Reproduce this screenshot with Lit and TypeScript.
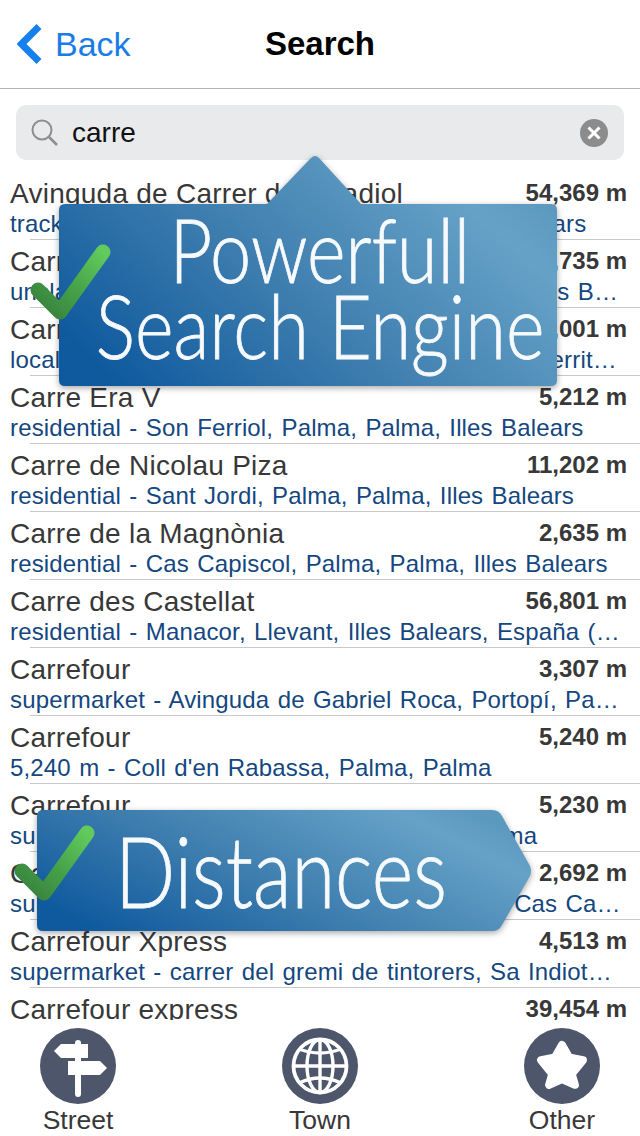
import { LitElement, html, css, svg } from "lit";
import { customElement } from "lit/decorators.js";

const rows = [
  ["Avinguda de Carrer del Gradiol", "54,369 m", "track - Son Ferriol, Inca, Palma, Palma, Illes Balears"],
  ["Carrer de Sa Creu", "2,735 m", "unclassified - El Pont d'Inca, Marratxí, Ponent, Illes Balears, España"],
  ["Carrer Gran", "8,001 m", "local - El Coll d'en Rabassa, Palma, Palma, Illa, territori balear"],
  ["Carre Era V", "5,212 m", "residential - Son Ferriol, Palma, Palma, Illes Balears"],
  ["Carre de Nicolau Piza", "11,202 m", "residential - Sant Jordi, Palma, Palma, Illes Balears"],
  ["Carre de la Magnònia", "2,635 m", "residential - Cas Capiscol, Palma, Palma, Illes Balears"],
  ["Carre des Castellat", "56,801 m", "residential - Manacor, Llevant, Illes Balears, España (mar territorial)"],
  ["Carrefour", "3,307 m", "supermarket - Avinguda de Gabriel Roca, Portopí, Palma, Palma"],
  ["Carrefour", "5,240 m", "5,240 m - Coll d'en Rabassa, Palma, Palma"],
  ["Carrefour", "5,230 m", "supermarket - Coll d'en Rabassa, Palma, Palma"],
  ["Carrefour", "2,692 m", "supermarket - carrer de Li Verdaguer, Palma, Cas Capiscol, Palma"],
  ["Carrefour Xpress", "4,513 m", "supermarket - carrer del gremi de tintorers, Sa Indiotería, Palma"],
  ["Carrefour express", "39,454 m", "supermarket - Avinguda de Mallorca, Palma"],
];

const gradient = (id: string) => svg`
  <defs>
    <linearGradient id=${id} x1="0" y1="0.75" x2="1" y2="0.25">
      <stop offset="0" stop-color="#0f5a9e" />
      <stop offset="0.4" stop-color="#3b7bad" />
      <stop offset="0.88" stop-color="#66a2c7" />
      <stop offset="1" stop-color="#5c99bf" />
    </linearGradient>
  </defs>`;

const check = (id: string) => html`
  <svg class="check" viewBox="0 0 90 84" width="90" height="84">
    <defs>
      <linearGradient id=${id} x1="0" y1="1" x2="1" y2="0">
        <stop offset="0" stop-color="#37803c" />
        <stop offset="0.5" stop-color="#46a34a" />
        <stop offset="1" stop-color="#62cb5c" />
      </linearGradient>
    </defs>
    <path d="M11 49 L33 71 L76 11" fill="none" stroke="url(#${id})" stroke-width="15" stroke-linecap="round" stroke-linejoin="round" />
  </svg>`;

@customElement("app-root")
export class AppRoot extends LitElement {
  static styles = css`
    :host {
      display: flex;
      flex-direction: column;
      position: relative;
      width: 640px;
      height: 1136px;
      overflow: hidden;
      background: #fff;
      font-family: "Liberation Sans", Arial, sans-serif;
      color: #333;
    }

    .nav {
      flex: none;
      height: 88px;
      box-sizing: content-box;
      border-bottom: 1px solid #b4b4b4;
      display: grid;
      grid-template-columns: 1fr auto 1fr;
      align-items: center;
    }

    .back {
      display: flex;
      align-items: center;
      gap: 13px;
      padding-left: 17px;
      font-size: 34px;
      color: #1a7de6;
    }

    .title {
      font-size: 33px;
      font-weight: 700;
      color: #000;
    }

    .search {
      flex: none;
      margin: 16px 16px 12px;
      height: 55px;
      border-radius: 10px;
      background: #e9eaec;
      display: flex;
      align-items: center;
      padding: 0 16px 0 15px;
      gap: 14px;
      font-size: 28px;
      color: #111;
    }

    .search span {
      flex: 1;
    }

    .list {
      flex: none;
      height: 848px;
      overflow: hidden;
    }

    .row {
      position: relative;
      height: 68px;
      box-sizing: border-box;
      padding: 5px 13px 0 10px;
    }

    .row::after {
      content: "";
      position: absolute;
      left: 30px;
      right: 0;
      bottom: 0;
      height: 1px;
      background: #c8c8c8;
    }

    .top {
      display: flex;
      justify-content: space-between;
      align-items: flex-start;
      height: 32px;
    }

    .name {
      font-size: 28px;
      line-height: 33px;
      letter-spacing: 0.25px;
      color: #383838;
    }

    .dist {
      font-size: 24px;
      line-height: 32px;
      font-weight: 700;
      color: #383838;
    }

    .sub {
      font-size: 24px;
      letter-spacing: 0.15px;
      word-spacing: 1.5px;
      line-height: 29px;
      color: #14477f;
      white-space: nowrap;
      overflow: hidden;
      text-overflow: ellipsis;
      padding-right: 4px;
    }

    .tabs {
      flex: none;
      display: flex;
      justify-content: space-between;
      padding-top: 8px;
    }

    .tab {
      width: 156px;
      display: flex;
      flex-direction: column;
      align-items: center;
      font-size: 26.5px;
      line-height: 32px;
      color: #383838;
    }

    .callout {
      position: absolute;
      display: flex;
      flex-direction: column;
      align-items: center;
      color: #f7fafc;
      font-family: "Lato", sans-serif;
      font-weight: 300;
      -webkit-text-stroke: 0.8px #f7fafc;
    }

    .callout > svg.bg {
      position: absolute;
      inset: 0;
      overflow: visible;
      filter: drop-shadow(0 2px 3px rgba(0, 0, 0, 0.35));
    }

    .callout span {
      position: relative;
      white-space: nowrap;
    }

    .power {
      left: 59px;
      top: 155px;
      width: 498px;
      height: 231px;
      font-size: 88px;
      line-height: 76px;
      padding: 56px 0 0 24px;
      box-sizing: border-box;
    }

    .power span {
      transform: scaleX(0.84);
    }

    .dist-call {
      left: 37px;
      top: 810px;
      width: 495px;
      height: 121px;
      font-size: 98px;
      line-height: 121px;
      align-items: flex-start;
    }

    .dist-call span {
      left: 78px;
      transform: scaleX(0.81);
      transform-origin: left center;
    }

    .check {
      position: absolute;
    }

    .power .check {
      left: -32px;
      top: 86px;
    }

    .dist-call .check {
      left: -26px;
      top: 12px;
    }
  `;

  render() {
    return html`
      <div class="nav">
        <div class="back">
          <svg width="25" height="40" viewBox="0 0 25 40">
            <path d="M22 2.5 L4.5 20 L22 37.5" fill="none" stroke="#1580ee" stroke-width="7" />
          </svg>
          Back
        </div>
        <div class="title">Search</div>
        <div></div>
      </div>

      <div class="search">
        <svg width="27" height="27" viewBox="0 0 27 27">
          <circle cx="11" cy="11" r="9.5" fill="none" stroke="#8e8e8e" stroke-width="2" />
          <path d="M18 18 L26 26" stroke="#8e8e8e" stroke-width="2.5" />
        </svg>
        <span>carre</span>
        <svg width="28" height="28" viewBox="0 0 28 28">
          <circle cx="14" cy="14" r="14" fill="#8c8c8c" />
          <path d="M8.5 8.5 L19.5 19.5 M19.5 8.5 L8.5 19.5" stroke="#fff" stroke-width="3" />
        </svg>
      </div>

      <div class="list">
        ${rows.map(
          ([name, dist, sub]) => html`
            <div class="row">
              <div class="top">
                <span class="name">${name}</span>
                <span class="dist">${dist}</span>
              </div>
              <div class="sub">${sub}</div>
            </div>
          `
        )}
      </div>

      <div class="tabs">
        <div class="tab">
          <svg width="76" height="76" viewBox="0 0 76 76">
            <circle cx="38" cy="38" r="38" fill="#4d566b" />
            <g fill="#fff">
              <path d="M35 15 a3 3 0 0 1 6 0 V66 a3 3 0 0 1 -6 0 Z" />
              <path d="M21 16 H48 V30 H21 L14 23 Z" />
              <path d="M28 33 H60 L67 40 L60 47 H28 Z" />
            </g>
          </svg>
          Street
        </div>
        <div class="tab">
          <svg width="76" height="76" viewBox="0 0 76 76">
            <circle cx="38" cy="38" r="38" fill="#4d566b" />
            <g fill="none" stroke="#fff" stroke-width="3.4">
              <circle cx="38" cy="38" r="26.5" stroke-width="3.8" />
              <ellipse cx="38" cy="38" rx="13" ry="26.5" />
              <path d="M38 11.5 V64.5 M11.5 38 H64.5" />
              <path d="M17 21 Q38 29 59 21 M17 55 Q38 45 59 55" />
            </g>
          </svg>
          Town
        </div>
        <div class="tab">
          <svg width="76" height="76" viewBox="0 0 76 76">
            <circle cx="38" cy="38" r="38" fill="#4d566b" />
            <path
              d="M38 17 L45 29.3 L58.9 32.2 L47.7 46 L50.9 56.8 L38 51 L25.1 56.8 L28.3 46 L17.1 32.2 L31 29.3 Z"
              fill="#fff"
              stroke="#fff"
              stroke-width="8"
              stroke-linejoin="round"
            />
          </svg>
          Other
        </div>
      </div>

      <div class="callout power">
        <svg class="bg" width="498" height="231" viewBox="0 0 498 231">
          ${gradient("gp")}
          <path
            d="M6 49 H208 L252 3 Q256 -1 260 3 L302 49 H492 Q498 49 498 55 V225 Q498 231 492 231 H6 Q0 231 0 225 V55 Q0 49 6 49 Z"
            fill="url(#gp)"
          />
        </svg>
        <span>Powerfull</span>
        <span>Search Engine</span>
        ${check("cp")}
      </div>

      <div class="callout dist-call">
        <svg class="bg" width="495" height="121" viewBox="0 0 495 121">
          ${gradient("gd")}
          <path
            d="M6 0 H455 Q462 0 465 6 L493 56 Q495 61 493 66 L465 115 Q462 121 455 121 H6 Q0 121 0 115 V6 Q0 0 6 0 Z"
            fill="url(#gd)"
          />
        </svg>
        <span>Distances</span>
        ${check("cd")}
      </div>
    `;
  }
}
